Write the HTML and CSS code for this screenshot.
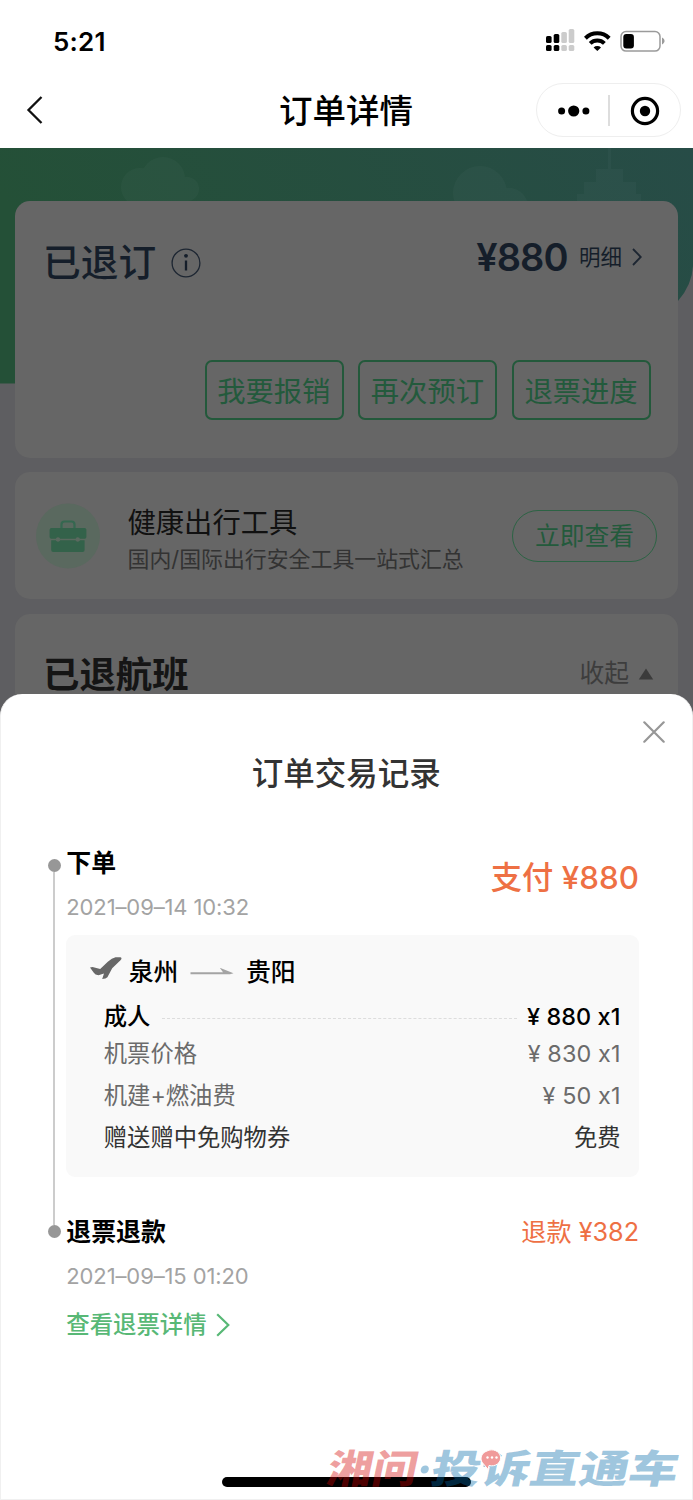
FILE: index.html
```html
<!DOCTYPE html>
<html lang="zh-CN">
<head>
<meta charset="utf-8">
<title>订单详情</title>
<link rel="stylesheet" href="styles.css">
</head>
<body>
<div class="screen">
  <header class="top">
    <div class="status">
      <span class="clock">5:21</span>
      <svg class="status-icons" width="122" height="28" viewBox="0 0 122 28">
        <g fill="#000">
          <rect x="1" y="9" width="5.600" height="7" rx="1.600"/><rect x="1" y="18" width="5.600" height="6" rx="1.600"/>
          <rect x="8.700" y="7" width="5.600" height="9" rx="1.600"/><rect x="8.700" y="18" width="5.600" height="6" rx="1.600"/>
        </g>
        <g fill="#ccc">
          <rect x="16.300" y="5" width="5.600" height="11" rx="1.600"/><rect x="16.300" y="18" width="5.600" height="6" rx="1.600"/>
          <rect x="23.700" y="2" width="5.600" height="14" rx="1.600"/><rect x="23.700" y="18" width="5.600" height="6" rx="1.600"/>
        </g>
        <g fill="none" stroke="#000" stroke-width="4">
          <path d="M40.4 11.2a17 17 0 0 1 23.8 0"/>
          <path d="M45.2 16.4a10.2 10.2 0 0 1 14.2 0"/>
        </g>
        <path d="M52.3 24l-3.700-3.500a5.400 5.400 0 0 1 7.400 0z"/>
        <rect x="76" y="4.500" width="39" height="19.600" rx="5" fill="none" stroke="#9b9b9b" stroke-width="1.500"/>
        <rect x="78.300" y="7" width="10.600" height="14.600" rx="3"/>
        <path d="M117 10.600c3.400 1.400 3.400 5.400 0 6.800z" fill="#9b9b9b"/>
      </svg>
    </div>
    <div class="nav">
      <svg class="back" width="18" height="30" viewBox="0 0 18 30"><path d="M15.500 2L2.500 15l13 13" fill="none" stroke="#111" stroke-width="2.300"/></svg>
      <h1 class="nav-title">订单详情</h1>
      <div class="capsule">
        <svg width="32" height="14" viewBox="0 0 32 14"><circle cx="3.600" cy="7" r="3.500"/><circle cx="15.700" cy="7" r="5.600"/><circle cx="27.900" cy="7" r="3.500"/></svg>
        <span class="capsule-line"></span>
        <svg width="30" height="30" viewBox="0 0 30 30"><circle cx="15" cy="15" r="12.600" fill="none" stroke="#000" stroke-width="3.200"/><circle cx="15" cy="15" r="5.200"/></svg>
      </div>
    </div>
  </header>

  <main class="order">
    <svg class="hero" width="693" height="236" viewBox="0 0 693 236">
      <defs>
        <linearGradient id="sky" x1="0" y1="0.200" x2="1" y2="0"><stop offset="0" stop-color="#245037"/><stop offset="1" stop-color="#274c47"/></linearGradient>
      </defs>
      <path d="M0 0H693V118Q692 137 678 153L600 235.500H0z" fill="url(#sky)"/>
      <g fill="#fff" opacity=".022">
        <circle cx="140" cy="39" r="19"/><circle cx="163" cy="31" r="22"/><circle cx="187" cy="41" r="12"/>
        <rect x="140" y="36" width="47" height="20"/>
        <circle cx="480" cy="45" r="27"/><circle cx="509" cy="59" r="19"/>
        <path d="M577 54V46h7V34h12V21h12V0h3v21h12v13h13v12h5v8z"/>
      </g>
    </svg>

    <section class="card summary">
      <div class="summary-head">
        <div class="state">
          <span class="state-text">已退订</span>
          <svg width="30" height="30" viewBox="0 0 30 30"><circle cx="15" cy="15" r="13.900" fill="none" stroke="#1d2632" stroke-width="1.300"/><circle cx="15" cy="7.800" r="1.900" fill="#151e2a"/><path d="M15 12.500v10" stroke="#151e2a" stroke-width="2.300"/></svg>
        </div>
        <div class="total">
          <span class="total-price">¥880</span>
          <span class="total-more">明细</span>
          <svg width="10" height="18" viewBox="0 0 10 18"><path d="M1 1l7.800 8L1 17" fill="none" stroke="#1d2632" stroke-width="1.800"/></svg>
        </div>
      </div>
      <div class="actions">
        <span class="action">我要报销</span>
        <span class="action">再次预订</span>
        <span class="action">退票进度</span>
      </div>
    </section>

    <section class="card tools">
      <svg class="tools-icon" width="64" height="66" viewBox="0 0 64 66">
        <ellipse cx="32" cy="33" rx="32" ry="32.600" fill="#5a695f"/>
        <path d="M25.500 25v-3.500q0-3 3-3h7q3 0 3 3V25" fill="none" stroke="#356850" stroke-width="2.200"/>
        <path d="M15.300 25h33.400q1.700 0 1.700 1.700v7.400q0 1.600-1.700 1.600h-5a2.400 2.400 0 0 0-4 0H24a2.400 2.400 0 0 0-4 0h-4.700q-1.700 0-1.700-1.600v-7.400q0-1.700 1.700-1.700z" fill="#33624a"/>
        <path d="M15.200 37.200h4.600a2.500 2.500 0 0 0 4.400 0h15.300a2.500 2.500 0 0 0 4.400 0h4.700V47q0 2-2 2H17.200q-2 0-2-2z" fill="#33624a"/>
        <g fill="#5a695f"><circle cx="22" cy="36.400" r="2.100"/><circle cx="41.700" cy="36.400" r="2.100"/></g>
      </svg>
      <div class="tools-text">
        <div class="tools-title">健康出行工具</div>
        <div class="tools-sub">国内/国际出行安全工具一站式汇总</div>
      </div>
      <span class="tools-btn">立即查看</span>
    </section>

    <section class="card flights">
      <span class="flights-title">已退航班</span>
      <span class="fold">收起<svg width="16" height="12" viewBox="0 0 16 12"><path d="M8 0.500L15.200 11.500H.8z" fill="#3b3b3b"/></svg></span>
    </section>
  </main>

  <section class="sheet">
    <div class="sheet-close">
      <svg width="22" height="22" viewBox="0 0 22 22"><path d="M1.300 1.300l19.400 19.400M20.700 1.300L1.300 20.700" stroke="#979797" stroke-width="2.200" stroke-linecap="round"/></svg>
    </div>
    <h2 class="sheet-title">订单交易记录</h2>
    <div class="timeline">
      <div class="rail"><i class="dot"></i><i class="rail-line"></i><i class="dot"></i></div>
      <div class="entries">
        <div class="entry-head">
          <div><div class="entry-name">下单</div><div class="entry-date">2021–09–14 10:32</div></div>
          <div class="pay">支付 ¥880</div>
        </div>
        <div class="detail">
          <div class="route">
            <svg class="plane" width="34" height="26" viewBox="0 0 34 26"><path d="M1 11.500L3.500 10.900 11.200 12.900 18.800 5.700Q23 2 26.500 1.300L31.500 1.300Q33.500 2 31.500 4.300L23.200 12.300 18.400 21.300Q17 22.800 13.200 23L15 17.400 9.500 19.200Q6 19 4.800 16.800Z" fill="#686868"/></svg>
            <span>泉州</span>
            <svg class="arrow" width="44" height="10" viewBox="0 0 44 10"><path d="M.500 7.200V5.200H33L29.800.8 43.500 6.200 40 7.200z" fill="#a4a4a4"/></svg>
            <span>贵阳</span>
          </div>
          <div class="row row-main"><span>成人</span><i class="dots"></i><span class="num">¥ 880 x1</span></div>
          <div class="row row-price"><span>机票价格</span><span class="num">¥ 830 x1</span></div>
          <div class="row row-fee"><span>机建+燃油费</span><span class="num">¥ 50 x1</span></div>
          <div class="row row-gift"><span>赠送赠中免购物券</span><span>免费</span></div>
        </div>
        <div class="refund-head"><span class="entry-name">退票退款</span><span class="refund">退款 ¥382</span></div>
        <div class="entry-date second">2021–09–15 01:20</div>
        <div class="link">查看退票详情<svg width="14" height="24" viewBox="0 0 14 24"><path d="M1.200 1.200L12.300 12 1.200 22.800" fill="none" stroke="#58b876" stroke-width="2.200"/></svg></div>
      </div>
    </div>
    <div class="home-bar"></div>
    <svg class="watermark" width="373" height="62" viewBox="0 0 373 62">
      <g class="wm-text" transform="translate(5 44.500) skewX(-12)">
        <text class="wm-red" x="0" y="0" textLength="90" lengthAdjust="spacingAndGlyphs">湘问</text>
        <circle class="wm-blue" cx="97" cy="-13" r="4"/>
        <text class="wm-blue" x="104" y="0" textLength="247" lengthAdjust="spacingAndGlyphs">投诉直通车</text>
      </g>
      <path d="M167 13a9 8 0 1 1 2 14.500l-1 4-4-5a9 8 0 0 1 3-13.500z" fill="#f09a9a" stroke="#fff" stroke-width="1"/>
      <g fill="#fff"><circle cx="167.500" cy="19.500" r="1.200"/><circle cx="172" cy="19.500" r="1.200"/><circle cx="176.500" cy="19.500" r="1.200"/></g>
    </svg>
  </section>
</div>
</body>
</html>
```
FILE: styles.css
```css
* { box-sizing: border-box; }
body { margin: 0; background: #fff; font-family: Inter, "Noto Sans CJK SC", sans-serif; font-feature-settings: "calt" 0; color: #000; }
h1, h2 { margin: 0; }
svg { display: block; flex: none; }
.screen { width: 693px; height: 1500px; overflow: hidden; display: flex; flex-direction: column; white-space: nowrap; }

.top { height: 147.5px; flex: none; }
.status { height: 83px; padding: 27px 26.5px 0 53px; display: flex; justify-content: space-between; }
.clock { font-size: 26px; font-weight: 600; line-height: 30px; letter-spacing: .2px; }
.nav { height: 54px; padding: 0 12px 0 26px; display: grid; grid-template-columns: 145px 1fr 145px; align-items: center; }
.nav-title { text-align: center; font-size: 33.5px; line-height: 54px; height: 54px; font-weight: 500; padding: 1px 15px 0 0; }
.capsule { height: 54px; border: 1.5px solid #eee; border-radius: 27px; display: flex; align-items: center; padding: 1px 0 0 20.5px; }
.capsule-line { width: 1.5px; height: 31px; background: #ddd; margin: 0 20px 0 18.5px; }

.order { position: relative; height: 572.5px; flex: none; background: #5e5e61; padding: 53.500px 15px 0; display: flex; flex-direction: column; gap: 14.500px; overflow: hidden; }
.hero { position: absolute; left: 0; top: 0; }
.card { position: relative; background: #666; border-radius: 15px; flex: none; }
.summary { height: 257px; padding: 32px 27px 0 28px; }
.summary-head { display: flex; justify-content: space-between; color: #151e2a; height: 127px; }
.state { display: flex; gap: 15px; align-items: center; height: 60px; }
.state-text { font-size: 37.7px; font-weight: 500; line-height: 59px; margin-top: -1px; }
.total { display: flex; align-items: center; height: 48px; padding-right: 9px; }
.total-price { font-size: 38px; font-weight: 600; letter-spacing: -1px; }
.total-more { font-size: 21.5px; line-height: 30px; margin: -1px 10px 0 11.5px; }
.actions { display: flex; justify-content: flex-end; gap: 14.600px; }
.action { width: 139px; height: 60px; border: 2px solid #23593b; border-radius: 7px; color: #235a3c; font-size: 28.3px; line-height: 60px; text-align: center; padding-right: 1px; }
.tools { height: 127px; padding: 0 21px 0 20.5px; margin-top: -.5px; display: flex; align-items: center; }
.tools-text { margin-left: 28px; padding-top: 4px; flex: 1; }
.tools-title { font-size: 28.3px; line-height: 42px; color: #111; }
.tools-sub { font-size: 21.9px; line-height: 30px; color: #333; }
.tools-btn { width: 145px; height: 52px; border: 1.5px solid #2c6344; border-radius: 26px; color: #235a3c; font-size: 24.8px; line-height: 51px; text-align: center; }
.flights { height: 150px; padding: 36px 24px 0 28px; display: flex; justify-content: space-between; }
.flights-title { font-size: 36.4px; line-height: 50px; font-weight: 700; color: #151515; }
.fold { display: flex; align-items: center; gap: 9px; height: 46px; font-size: 24.8px; line-height: 44px; color: #3d3d3d; }
.fold svg { margin-top: 3px; }

.sheet { position: relative; margin-top: -26px; height: 806px; flex: none; background: #fff; border: 1px solid #f0f0f0; border-top: 0; border-radius: 22px 22px 0 0; padding: 27px 27px 0 46.5px; display: flex; flex-direction: column; }
.sheet-close { display: flex; justify-content: flex-end; height: 22px; }
.sheet-title { font-size: 31.5px; font-weight: 500; line-height: 44px; color: #333; text-align: center; margin: 9px 20px 51px 0; }
.timeline { display: flex; gap: 6px; padding-right: 26px; }
.rail { width: 13px; padding-top: 11.5px; display: flex; flex-direction: column; align-items: center; }
.dot { width: 13px; height: 13px; border-radius: 50%; background: #979797; }
.rail-line { width: 2px; height: 353.5px; background: #ccc; }
.entries { flex: 1; margin-left: -.2px; }
.entry-head { display: flex; justify-content: space-between; height: 75px; }
.entry-name { font-size: 24.9px; line-height: 32px; font-weight: 600; }
.entry-date { font-size: 22px; line-height: 30px; color: #a3a3a3; margin-top: 12.5px; letter-spacing: -.12px; }
.pay { font-size: 31.3px; line-height: 62px; font-weight: 500; letter-spacing: .05px; color: #ee7044; }
.detail { height: 242px; margin-top: 13px; background: #f9f9f9; border-radius: 9px; padding: 22px 18.5px 0 37.500px; }
.route { display: flex; align-items: center; height: 30px; margin-left: -15px; font-size: 24.8px; font-weight: 500; line-height: 30px; }
.plane { margin: -6px 6px 0 0; }
.arrow { margin: 0 12px 0 11.5px; }
.row { display: flex; justify-content: space-between; line-height: 30px; font-size: 23.3px; color: #6b6b6b; }
.num { font-size: 23.4px; letter-spacing: .1px; }
.row-main { margin-top: 15px; color: #000; font-weight: 500; }
.dots { flex: 1; height: 0; border-top: 1.5px dashed #ddd; margin: 16px 10px 0 12px; }
.row-price { margin-top: 7px; }
.row-fee { margin-top: 12px; }
.row-gift { margin-top: 12px; color: #333; }
.refund-head { display: flex; justify-content: space-between; margin-top: 39px; }
.refund { font-size: 25.2px; line-height: 32px; color: #ee7044; }
.second { margin-top: 13px; }
.link { display: flex; align-items: center; gap: 9px; margin-top: 19px; font-size: 23.4px; line-height: 30px; font-weight: 500; color: #58b876; }
.home-bar { position: absolute; left: 221px; bottom: 12.500px; width: 249px; height: 9.500px; border-radius: 5px; background: #000; }
.watermark { position: absolute; left: 319px; bottom: -1px; }
.wm-text { font-family: "Noto Sans CJK SC", sans-serif; font-weight: 900; font-size: 39px; }
.wm-red { fill: rgba(210, 0, 0, .38); }
.wm-blue { fill: rgba(0, 105, 168, .38); }
```
